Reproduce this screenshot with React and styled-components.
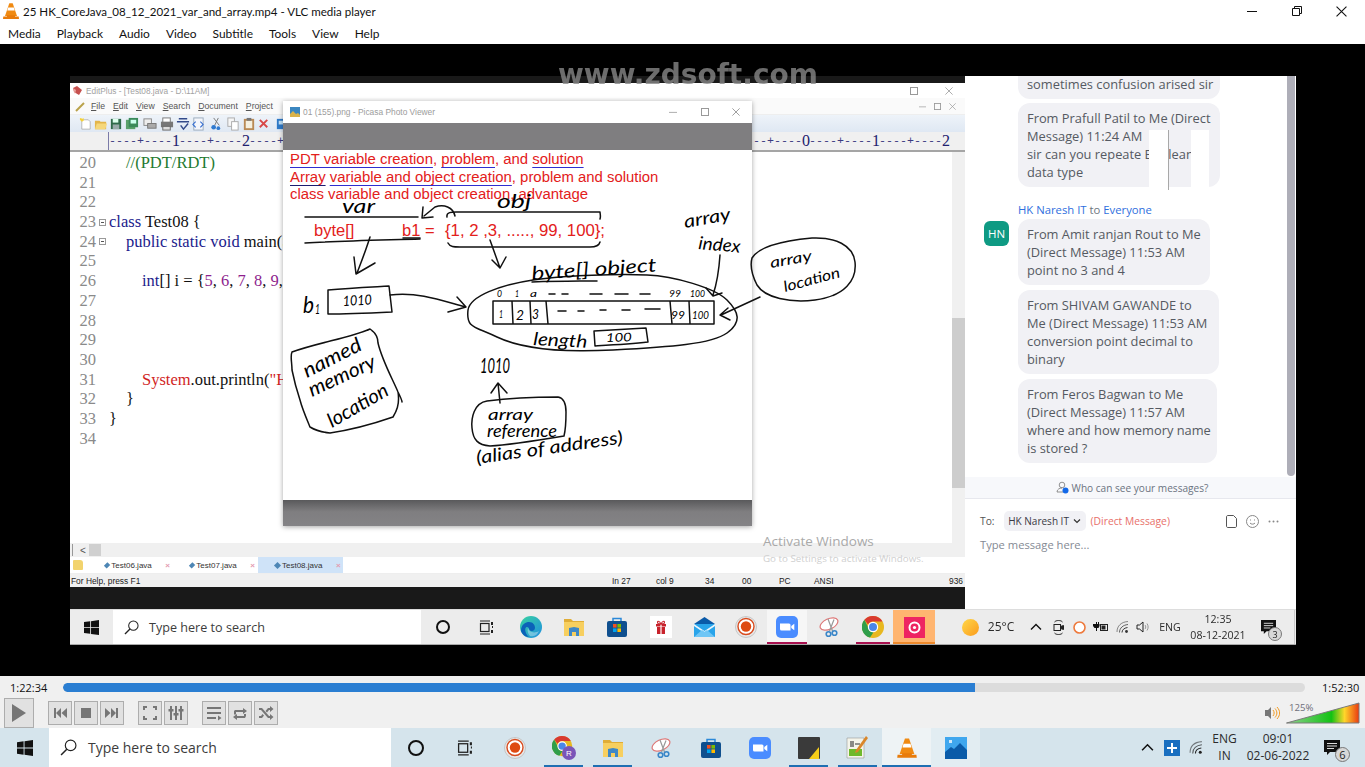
import React from 'react';
import styled, { createGlobalStyle } from 'styled-components';

const Global = createGlobalStyle`
  html, body { margin: 0; padding: 0; background: #000; overflow: hidden; }
  #root { width: 1365px; height: 767px; }
  * { box-sizing: border-box; }
`;

const UI = `"Open Sans", "Noto Sans", sans-serif`;
const SHELL = `Lato, "Open Sans", sans-serif`;
const ARIAL = `"Liberation Sans", Arial, sans-serif`;
const SERIF = `"Liberation Serif", "Times New Roman", serif`;
const MONO = `"Liberation Mono", monospace`;
const HANDFONT = `Lato, "Open Sans", sans-serif`;

/* ---------- page shell ---------- */
const Page = styled.div`
  width: 1365px; height: 767px; display: flex; flex-direction: column; overflow: hidden;
  font-family: ${UI}; color: #111; background: #000;
`;
const TitleBar = styled.header`
  height: 22px; flex: none; background: #fff; display: flex; align-items: center; padding-left: 2px;
  font: 11.55px ${SHELL}; color: #111; white-space: nowrap;
`;
const TitleText = styled.span` margin-left: 3px; flex: 1; `;
const WindowButtons = styled.div` display: flex; height: 22px; margin-right: 1px; `;
const WindowButton = styled.div`
  width: 45px; display: flex; align-items: center; justify-content: center;
  svg { display: block; }
`;
const MenuBar = styled.nav`
  height: 22px; flex: none; background: #fff; display: flex; align-items: center; padding-left: 8px; gap: 16px;
  font: 11.95px ${SHELL}; color: #111;
`;
const VideoStage = styled.main`
  position: relative; height: 632px; flex: none; background: #000; padding: 32px 69px 31px 70px;
`;
const Watermark = styled.div`
  position: absolute; left: 558px; top: 14px; width: 259px; z-index: 5; white-space: nowrap; line-height: 34px;
  font-family: "DejaVu Sans", ${ARIAL}; font-weight: bold; font-size: 28px; color: rgba(135,135,135,.8); text-align: center; filter: blur(.5px);
`;
const RemoteScreen = styled.div` height: 569px; display: flex; flex-direction: column; filter: blur(.35px); `;
const RemoteMain = styled.div` flex: 1; display: flex; min-height: 0; `;
const Desktop = styled.div`
  position: relative; width: 895px; background: #191919; padding: 7px 0 22px;
`;

/* ---------- EditPlus ---------- */
const EditPlus = styled.section`
  position: relative; height: 504px; background: #fff; display: flex; flex-direction: column;
`;
const EpTitle = styled.div`
  height: 15px; display: flex; align-items: center; padding: 0 12px 0 2px; gap: 3px; background: #fff;
  font: 8.3px ${ARIAL}; color: #a2a2a2;
`;
const EpTitleText = styled.span` flex: 1; `;
const EpWinBtn = styled.span` margin-left: 24px; width: 8px; height: 8px; display: flex; svg { display: block; } `;
const EpMenu = styled.div`
  height: 16px; display: flex; align-items: center; padding: 0 9px 0 5px; gap: 8px; background: #fafafa;
  font: 8.7px ${ARIAL}; color: #555;
  u { text-underline-offset: 1px; }
`;
const EpPencil = styled.svg` margin-right: -3px; flex: none; `;
const EpMenuSpacer = styled.span` flex: 1; `;
const EpToolbar = styled.div`
  height: 18px; display: flex; align-items: center; padding-left: 8px; background: linear-gradient(#eef3f9, #dfe8f3);
  border-top: 1px solid #eee;
`;
const ToolSlot = styled.span`
  width: ${p => p.$w || 15.4}px; flex: none; display: flex; justify-content: center;
  svg { display: block; }
`;
const Ruler = styled.div`
  height: 20px; background: #f0f0f0; border-bottom: 2px solid #a5a5a5; display: flex; align-items: center;
  padding-left: 38px; overflow: hidden;
`;
const RulerTrack = styled.div`
  height: 18px; width: 844px; border-left: 1px solid #7b7ba8; display: flex; align-items: center;
  font: 11.67px ${MONO}; color: #3a3a80; white-space: pre; background: #f0f0f0;
`;
const RulerMark = styled.span`
  width: 7px; flex: none; text-align: center;
`;
const RulerDigit = styled(RulerMark)`
  font: 16px ${SERIF}; color: #20206e;
`;
const EditorBody = styled.div` flex: 1; display: flex; min-height: 0; background: #fff; `;
const CodeArea = styled.div` flex: 1; padding-top: 1px; overflow: hidden; `;
const CodeLine = styled.div`
  height: 19.7px; display: grid; grid-template-columns: 26px 13px 1fr; align-items: center;
  font: 16.5px ${SERIF}; white-space: pre; color: #111;
`;
const LineNo = styled.span` text-align: right; color: #8a8a8a; `;
const FoldCell = styled.span` display: flex; justify-content: center; `;
const FoldBox = styled.span`
  width: 7px; height: 7px; border: 1px solid #999; position: relative;
  &::after { content: ''; position: absolute; left: 1px; right: 1px; top: 2px; height: 1px; background: #555; }
`;
const Code = styled.span` padding-left: ${p => p.$i || 0}px; `;
const Kw = styled.span` color: #1b1b8c; `;
const Str = styled.span` color: #8e1f8e; `;
const Red = styled.span` color: #d11f1f; `;
const Cm = styled.span` color: #1f7a30; `;
const EdScroll = styled.div`
  width: 13px; flex: none; background: #f0f0f0; padding-top: 166px;
`;
const EdThumb = styled.div` width: 13px; height: 170px; background: #cdcdcd; `;
const HScroll = styled.div`
  height: 14px; background: #f0f0f0; display: flex; align-items: center; padding-left: 2px;
  font: 10px ${ARIAL}; color: #555;
`;
const HScrollEdge = styled.span` width: 1px; height: 12px; background: #999; margin-right: 7px; `;
const HThumb = styled.span` width: 12px; height: 12px; background: #d0d0d0; margin-left: 3px; `;
const TabsRow = styled.div` height: 17px; display: flex; align-items: stretch; background: #fff; padding-left: 3px; border-bottom: 1px solid #eee; `;
const TabFolder = styled.span` width: 10px; height: 10px; margin-top: 3px; background: #f2d36d; border-radius: 1px 3px 1px 1px; margin-right: 0; `;
const Tab = styled.div`
  width: 85px; margin-left: ${p => p.$ml || 0}px; display: flex; align-items: center; padding-left: ${p => p.$pl || 18}px;
  background: ${p => p.$active ? '#cfe3f8' : 'transparent'};
  font: 8px ${ARIAL}; color: #333;
`;
const TabDot = styled.span` width: 5px; height: 5px; background: #4d86b5; transform: rotate(45deg); margin-right: 2px; `;
const TabName = styled.span` width: 40px; white-space: nowrap; `;
const TabClose = styled.span` margin-left: 14px; color: #e49ab0; font-size: 8px; font-weight: bold; `;
const Status = styled.div`
  height: 13px; background: #f0f0f0; padding-left: 1px; display: grid;
  grid-template-columns: 541px 44px 49px 37px 37px 35px 135px 1fr; align-items: center;
  font: 8.4px ${ARIAL}; color: #222; white-space: nowrap;
`;
const ActivateNote = styled.div`
  position: absolute; left: 693px; top: 449px; z-index: 1; pointer-events: none; white-space: nowrap;
  color: #a9a9a9; font: 13.5px ${UI};
`;
const ActivateSub = styled.div` margin-top: 2px; font: 9.8px ${UI}; color: #cfcfcf; `;

/* ---------- Picasa ---------- */
const Picasa = styled.section`
  position: absolute; left: 213px; top: 25px; width: 469px; height: 425px; z-index: 2; background: #fff;
  display: flex; flex-direction: column; box-shadow: 0 1px 5px rgba(0,0,0,.35);
`;
const PicasaTitle = styled.div`
  height: 22px; flex: none; display: flex; align-items: center; padding-left: 7px; background: #fff;
  font: 8.4px ${ARIAL}; color: #9c9c9c;
`;
const PicasaTitleText = styled.span` flex: 1; margin-left: 3px; `;
const PicasaBtn = styled.span` width: 31.5px; display: flex; justify-content: center; svg { display: block; } `;
const PicasaTop = styled.div` height: 27px; flex: none; background: #7f7e80; `;
const PicasaImage = styled.div` position: relative; height: 350px; flex: none; background: #fff; padding: 1px 0 0 7px; `;
const PicasaBottom = styled.div` flex: 1; background: linear-gradient(#59595b, #7f7e80 45%, #848386); `;
const SlideLine = styled.div`
  height: 17.6px; font: 14.9px/17.6px ${ARIAL}; color: #e3201b; white-space: nowrap;
`;
const Under = styled.span`
  text-decoration: underline; text-decoration-color: ${p => p.$dark ? '#1c1c70' : '#2e2ed0'};
  text-decoration-thickness: 1.2px; text-underline-offset: 3px;
`;
const Sketch = styled.svg`
  position: absolute; left: 0; top: 0; overflow: visible; pointer-events: none;
`;
const Ink = styled.path` fill: none; stroke: #111; stroke-width: 1.5; stroke-linecap: round; stroke-linejoin: round; `;
const HandText = styled.text` font-family: ${HANDFONT}; font-style: italic; font-weight: 400; fill: #000; `;
const RedText = styled.text` font-family: ${ARIAL}; fill: #e3201b; `;

/* ---------- chat ---------- */
const Chat = styled.aside`
  position: relative; width: 331px; background: #fff; display: flex; flex-direction: column; font-family: ${UI};
`;
const ChatScrollThumb = styled.div`
  position: absolute; right: 1px; top: 0; width: 8px; height: 400px; background: #aeaeb8; border-radius: 0 0 4px 4px; z-index: 2;
`;
const ChatList = styled.div`
  height: 401px; flex: none; overflow: hidden; display: flex; flex-direction: column; justify-content: flex-end;
  gap: 16px; padding: 0 0 14px 19px;
`;
const MsgGroup = styled.div`
  display: grid; grid-template-columns: 25px 1fr; column-gap: 9px; flex: none;
`;
const Sender = styled.div`
  grid-column: 2; height: 16px; font-size: 11.3px; line-height: 14px; color: #2f6fde; white-space: nowrap;
`;
const SenderTo = styled.span` color: #6e7680; `;
const Avatar = styled.div`
  grid-column: 1; width: 25px; height: 25px; margin-top: 2px; border-radius: 6px; background: #0e9a83; color: #fff;
  font-size: 11.5px; display: flex; align-items: center; justify-content: center;
`;
const Bubbles = styled.div` grid-column: 2; display: flex; flex-direction: column; gap: ${p => p.$gap || 5}px; position: relative; `;
const Bubble = styled.div`
  width: ${p => p.$w}px; padding: 6px 9px; border-radius: 12px; background: #f1f1f5; color: #555a62;
  font-size: 12.85px; line-height: 18px; white-space: nowrap; flex: none;
`;
const Glitch = styled.div`
  position: absolute; bottom: -3px; height: 60px; width: ${p => p.$w}px; left: ${p => p.$x}px; background: #fff;
  border-right: ${p => p.$line ? '1px solid #a8a8a8' : 'none'};
`;
const WhoCan = styled.div`
  height: 22px; flex: none; background: #f7f8fb; border-bottom: 1px solid #e7e8ee; display: flex; align-items: center; justify-content: center;
  gap: 3px; padding-left: 3px; font-size: 10.1px; color: #6b7380;
  svg { display: block; }
`;
const Compose = styled.div` flex: 1; background: #fff; padding: 12px 15px; `;
const ToRow = styled.div` display: flex; align-items: center; height: 20px; font-size: 10.3px; color: #555; `;
const ToChip = styled.div`
  margin-left: 9px; width: 82px; height: 20px; border-radius: 5px; background: #f1f1f5; color: #3a3a44;
  display: flex; align-items: center; justify-content: center; gap: 4px; white-space: nowrap; font-size: 10px;
  svg { display: block; }
`;
const DirectTag = styled.span` margin-left: 5px; flex: 1; color: #e8706a; white-space: nowrap; `;
const ToIcons = styled.div` display: flex; align-items: center; gap: 9px; margin-right: 2px; svg { display: block; } `;
const Placeholder = styled.div` margin-top: 5px; font-size: 11.2px; line-height: 18px; color: #848a94; `;

/* ---------- remote taskbar ---------- */
const RemoteTaskbar = styled.div`
  height: 36px; flex: none; display: flex; background: #ececec; border-bottom: 1px solid #a9a9a9; border-top: 1px solid #ddd;
  padding-right: 3px;
`;
const StartSlot = styled.div` width: ${p => p.$w}px; flex: none; display: flex; align-items: center; justify-content: center; svg { display: block; } `;
const SearchBox = styled.div`
  width: ${p => p.$w}px; flex: none; background: #fff; display: flex; align-items: center; color: #3c3c3c;
  font-size: ${p => p.$fs}px; padding-left: ${p => p.$pl}px; gap: ${p => p.$gap}px; white-space: nowrap;
  svg { display: block; }
`;
const Tile = styled.div`
  position: relative; width: ${p => p.$w}px; flex: none; display: flex; align-items: center; justify-content: center;
  background: ${p => p.$bg || 'transparent'};
  svg { display: block; }
  ${p => p.$bar ? `&::after { content: ''; position: absolute; bottom: 0; left: ${p.$inset || 0}px; right: ${p.$inset || 0}px; height: 2px; background: ${p.$bar}; }` : ''}
`;
const CortanaRing = styled.span`
  width: ${p => p.$s}px; height: ${p => p.$s}px; border: 2.6px solid #111; border-radius: 50%; display: block;
`;
const TrayCell = styled.div`
  width: ${p => p.$w}px; flex: none; display: flex; flex-direction: column; align-items: center; justify-content: center;
  font-size: ${p => p.$fs || 11}px; line-height: ${p => p.$lh || 16}px; color: #2b2b2b; white-space: nowrap; position: relative;
  svg { display: block; }
`;
const TrayGap = styled.div` width: ${p => p.$w}px; flex: none; `;
const TrayEnd = styled.div` width: 1px; margin: 0 0 0 5px; background: #c9c9c9; flex: none; `;
const NotifBadge = styled.span`
  position: absolute; left: ${p => p.$x}px; top: ${p => p.$y}px; width: ${p => p.$s}px; height: ${p => p.$s}px; border-radius: 50%;
  background: #d8d8d8; border: 1px solid #777; color: #222; font-size: ${p => p.$fs}px; line-height: 1;
  display: flex; align-items: center; justify-content: center;
`;

/* ---------- VLC footer ---------- */
const SeekRow = styled.div`
  height: 21px; flex: none; background: #f0f0f0; display: flex; align-items: center; padding: 1px 7px 0 10px;
  font-size: 11px; color: #111;
`;
const TimeLabel = styled.span` width: 36px; white-space: nowrap; `;
const SeekTrack = styled.div` flex: 1; height: 9px; margin: 0 17px; border-radius: 5px; background: #dcdcdc; overflow: hidden; `;
const SeekFill = styled.div` height: 100%; background: #2a7ed2; border-radius: 5px 0 0 5px; `;
const ControlsRow = styled.div`
  height: 31px; flex: none; background: #f0f0f0; display: flex; align-items: center; padding-left: 4px;
`;
const PlayButton = styled.button`
  width: 30px; height: 30px; padding: 0; border: 1px solid #adadad; background: #e1e1e1; display: flex; align-items: center; justify-content: center;
  margin-right: 14px; svg { display: block; }
`;
const CtlGroup = styled.div` display: flex; gap: 2px; margin-right: 14px; `;
const CtlButton = styled.button`
  width: 24px; height: 24px; padding: 0; border: 1px solid #adadad; background: #e1e1e1; display: flex; align-items: center; justify-content: center;
  svg { display: block; }
`;
const VolumeBox = styled.div`
  position: relative; margin-left: auto; margin-right: 5px; display: flex; align-items: center; gap: 6px; height: 31px;
  svg { display: block; }
`;
const VolumeText = styled.span`
  position: absolute; left: 24px; top: 4px; font-size: 9.6px; color: #6f6f7a;
`;
const Taskbar = styled.footer`
  height: 39px; flex: none; background: #d5e4ec; display: flex; padding-right: 15px;
`;
const TaskSpacer = styled.div` flex: 1; `;

/* ---------- icons ---------- */
const WinLogo = ({ s = 16 }) => (
  <svg width={s} height={s} viewBox="0 0 16 16"><path fill="#111" d="M0 2.2 6.6 1.3v6.3H0zM7.5 1.2 16 0v7.6H7.5zM0 8.4h6.6v6.3L0 13.8zM7.5 8.4H16V16l-8.5-1.2z" /></svg>
);
const SearchGlyph = ({ s = 16 }) => (
  <svg width={s} height={s} viewBox="0 0 16 16" fill="none" stroke="#222" strokeWidth="1.1"><circle cx="10" cy="6" r="5" /><path d="M6.4 9.6 1 15" strokeWidth="1.4" /></svg>
);
const TaskView = ({ s = 15 }) => (
  <svg width={s} height={s} viewBox="0 0 15 15" fill="none" stroke="#222" strokeWidth="1.2"><rect x="1.5" y="3.5" width="8.5" height="8" /><path d="M1 1h10M1 14h10" /><path d="M13 2v3M13 7h1M13 10v3" strokeWidth="2" /></svg>
);
const VlcCone = ({ s = 18 }) => (
  <svg width={s} height={s} viewBox="0 0 18 18"><path fill="#f08a12" d="M7.3 1.2h3.4L15 14H3z" /><path fill="#fff" d="M6.2 5.5h5.6l.9 3H5.3z" /><path fill="#e87b0a" d="M1.3 14.5H5v-1.2h8v1.2h3.7l.3 2.4H1z" /></svg>
);
const Edge = ({ s = 22 }) => (
  <svg width={s} height={s} viewBox="0 0 22 22">
    <defs>
      <linearGradient id="edgeA" x1="0" y1="0" x2="1" y2="1"><stop offset="0" stopColor="#38d3a0" /><stop offset="1" stopColor="#1f8ee0" /></linearGradient>
    </defs>
    <circle cx="11" cy="11" r="11" fill="url(#edgeA)" />
    <path fill="#0b62b8" d="M1 15C1 8 6 6 9 6c4 0 6 3 6 6 0 2-2 3-3 3-4 0-2-4-5-4-3 0-2 7 2 10-4 0-7-3-8-6z" />
    <path fill="#fff" opacity=".35" d="M8 12c1 4 6 6 11 3-2 5-7 6-9 5-2-2-3-5-2-8z" />
  </svg>
);
const Files = ({ s = 22 }) => (
  <svg width={s} height={s} viewBox="0 0 22 22"><path fill="#e0ad37" d="M1 3h7l2 2h11v3H1z" /><path fill="#f7cf5f" d="M1 6h20v14H1z" /><path fill="#3e88c7" d="M6 20v-8l5-1 5 1v8h-3v-4H9v4z" /></svg>
);
const Store = ({ s = 22 }) => (
  <svg width={s} height={s} viewBox="0 0 22 22"><path fill="none" stroke="#2b88d8" strokeWidth="1.5" d="M7 5V2.5h8V5" /><rect x="1" y="5" width="20" height="16" rx="2" fill="#0f4f8e" /><rect x="7" y="8" width="3.6" height="3.6" fill="#f25022" /><rect x="11.4" y="8" width="3.6" height="3.6" fill="#7fba00" /><rect x="7" y="12.4" width="3.6" height="3.6" fill="#00a4ef" /><rect x="11.4" y="12.4" width="3.6" height="3.6" fill="#ffb900" /></svg>
);
const Gift = ({ s = 22 }) => (
  <svg width={s} height={s} viewBox="0 0 22 22"><rect width="22" height="22" fill="#fff" /><path fill="#c8232c" d="M6 8h10v2.5H6zM7 11h8v7H7z" /><path fill="#fff" d="M10.4 8h1.2v10h-1.2z" /><path fill="none" stroke="#c8232c" strokeWidth="1.1" d="M11 8C9 4 6.5 5 8 7.5zM11 8c2-4 4.5-3 3-.5z" /></svg>
);
const Mail = ({ s = 23 }) => (
  <svg width={s} height={s} viewBox="0 0 23 23"><path fill="#0a5aa8" d="M1 8 11.5 1 22 8v1H1z" /><rect x="1" y="8" width="21" height="13" fill="#29a4ea" /><path fill="#fff" d="M1 8l10.5 7L22 8v2l-10.5 7L1 10z" opacity=".9" /><path fill="#6fc6f5" d="M1 21l8-7 2.5 1.7L14 14l8 7z" /></svg>
);
const Record = ({ s = 22 }) => (
  <svg width={s} height={s} viewBox="0 0 22 22"><circle cx="11" cy="11" r="10.5" fill="#e8e8e8" stroke="#bdbdbd" strokeWidth=".8" /><circle cx="11" cy="10.5" r="8" fill="#fff" stroke="#d84b1e" strokeWidth="1.4" /><circle cx="11" cy="10.5" r="5.2" fill="#de4a12" /></svg>
);
const ZoomApp = ({ s = 22 }) => (
  <svg width={s} height={s} viewBox="0 0 22 22"><rect width="22" height="22" rx="5" fill="#4a8cff" /><path fill="#fff" d="M4 7.5h9a1.5 1.5 0 0 1 1.5 1.5v5.5H5.5A1.5 1.5 0 0 1 4 13zM15.3 10l3-2.2v6.4l-3-2.2z" /></svg>
);
const Snip = ({ s = 22 }) => (
  <svg width={s} height={s} viewBox="0 0 22 22" fill="none"><ellipse cx="10" cy="8" rx="9.5" ry="5.2" transform="rotate(-25 10 8)" stroke="#d77" strokeWidth="1.2" fill="#fff" /><path d="M9 3l4.5 12M15 3.5 10.5 15" stroke="#999" strokeWidth="1.2" /><circle cx="9.5" cy="18" r="2.3" stroke="#3a86c8" strokeWidth="1.6" /><circle cx="15.5" cy="17" r="2.3" stroke="#3a86c8" strokeWidth="1.6" /></svg>
);
const Chrome = ({ s = 22 }) => (
  <svg width={s} height={s} viewBox="0 0 22 22"><circle cx="11" cy="11" r="11" fill="#e8b820" /><path fill="#d93a30" d="M11 0a11 11 0 0 1 9.5 5.5H11a5.5 5.5 0 0 0-5 3L2.4 3.8A11 11 0 0 1 11 0z" /><path fill="#2f9e4a" d="M2.4 3.8 6.5 12a5 5 0 0 0 5 4.3L8 21.6A11 11 0 0 1 2.4 3.8z" /><circle cx="11" cy="11" r="5.2" fill="#fff" /><circle cx="11" cy="11" r="4" fill="#4a86e8" /></svg>
);
const ChromeProfile = ({ s = 24 }) => (
  <svg width={s} height={s} viewBox="0 0 24 24"><g transform="scale(.92)"><circle cx="11" cy="11" r="11" fill="#e8b820" /><path fill="#d93a30" d="M11 0a11 11 0 0 1 9.5 5.5H11a5.5 5.5 0 0 0-5 3L2.4 3.8A11 11 0 0 1 11 0z" /><path fill="#2f9e4a" d="M2.4 3.8 6.5 12a5 5 0 0 0 5 4.3L8 21.6A11 11 0 0 1 2.4 3.8z" /><circle cx="11" cy="11" r="5.2" fill="#fff" /><circle cx="11" cy="11" r="4" fill="#4a86e8" /></g><circle cx="17" cy="17" r="7" fill="#7a55b8" /><text x="17" y="20" fontSize="8" fill="#fff" textAnchor="middle" fontFamily={ARIAL}>R</text></svg>
);
const PinkApp = () => (
  <svg width="21" height="21" viewBox="0 0 21 21"><rect width="21" height="21" fill="#ee2462" /><circle cx="10.5" cy="10.5" r="5" fill="none" stroke="#fff" strokeWidth="2" /><circle cx="10.5" cy="10.5" r="1.6" fill="#fff" /></svg>
);
const Sun = () => (
  <svg width="17" height="17" viewBox="0 0 17 17"><defs><linearGradient id="sunA" x1="0" y1="0" x2="1" y2="1"><stop offset="0" stopColor="#ffd84a" /><stop offset="1" stopColor="#fb9b1c" /></linearGradient></defs><circle cx="8.5" cy="8.5" r="8.5" fill="url(#sunA)" /></svg>
);
const Chevron = ({ s = 12 }) => (
  <svg width={s} height={s} viewBox="0 0 12 12" fill="none" stroke="#111" strokeWidth="1.4"><path d="M1 8.5 6 3.5l5 5" /></svg>
);
const MeetIcon = () => (
  <svg width="11" height="17" viewBox="0 0 11 17" fill="none" stroke="#222" strokeWidth="1"><path d="M1.5 3C3 1 8 1 9.5 3M1.5 14c1.5 2 6.5 2 8 0" /><rect x="1" y="5.5" width="6.5" height="6" /><path d="M7.5 7.5l3-1v4l-3-1z" fill="#222" /></svg>
);
const OrangeRing = () => (
  <svg width="13" height="15" viewBox="0 0 13 15"><circle cx="6.5" cy="7.5" r="5.5" fill="#fff" stroke="#ee7a3d" strokeWidth="1.6" /></svg>
);
const Battery = () => (
  <svg width="15" height="11" viewBox="0 0 15 11"><path fill="#111" d="M0 2h3V0h1v2h1V0h1v2h.5v2l-1 2H4v3H3V6H1.500L0 4z" /><rect x="7.500" y="2.500" width="7" height="6" fill="none" stroke="#222" strokeWidth="1" /><rect x="8.500" y="3.500" width="4" height="4" fill="#222" /></svg>
);
const Wifi = ({ s = 14, c = '#333' }) => (
  <svg width={s} height={s} viewBox="0 0 14 14" fill="none" stroke={c} strokeWidth="1"><path d="M1 12C1 6 5 2 12 1.500" opacity=".55" /><path d="M3.500 12.500C3.500 8 7 5 12 4.500" opacity=".75" /><path d="M6 12.500C6 10 8 8 11.500 7.500" /><circle cx="10.500" cy="11.500" r="1.400" fill={c} stroke="none" /></svg>
);
const Speaker = () => (
  <svg width="15" height="14" viewBox="0 0 15 14" fill="none" stroke="#222" strokeWidth="1"><path d="M1 5h2.500L7 2v10L3.500 9H1z" /><path d="M9 5c1 1 1 3 0 4M11 3.500c1.500 2 1.500 5 0 7" stroke="#999" /></svg>
);
const NotifIcon = ({ s = 16 }) => (
  <svg width={s} height={s} viewBox="0 0 16 16"><path fill="#111" d="M0 0h16v12H6l-3 3v-3H0z" /><path stroke="#ddd" strokeWidth="1" d="M3 3.500h10M3 6h10M3 8.500h7" /></svg>
);
const Stickies = () => (
  <svg width="22" height="22" viewBox="0 0 22 22"><rect width="22" height="22" rx="1" fill="#3a3a3a" /><path fill="#f5cd1a" d="M11 22 21 10v12z" /></svg>
);
const Notepad = () => (
  <svg width="23" height="24" viewBox="0 0 23 24"><path fill="#f4f4ea" stroke="#999" strokeWidth=".6" d="M1 2h17v20H1z" /><path fill="#6fb92c" d="M3 13h13v7H3z" /><path stroke="#333" strokeWidth="1.1" d="M5 5v6M7 5v6M9 8h5" /><path fill="#d9862a" d="M20 0l2 2-10 14-3 1 1-3z" /></svg>
);
const Photos = () => (
  <svg width="22" height="22" viewBox="0 0 22 22"><rect width="22" height="22" fill="#0a5ba8" /><path fill="#3fa7ee" d="M0 0h22v13L15 6l-6 6-3-2-6 5z" /><path fill="#cfe8fa" d="M4 3h3v3H4z" /></svg>
);
const EpLogo = () => (
  <svg width="11" height="11" viewBox="0 0 11 11"><path fill="#c6504e" d="M1 3l4-2 5 4-3 5-5-3z" /><path fill="#e9a5a0" d="M1 3l3 2-1 4z" /></svg>
);
const WinMin = ({ c = '#111', s = 10 }) => <svg width={s} height={s} viewBox="0 0 10 10"><path d="M0 5.500h10" stroke={c} /></svg>;
const WinMax = ({ c = '#111', s = 10 }) => <svg width={s} height={s} viewBox="0 0 10 10" fill="none" stroke={c}><path d="M2.500 2.500V.5h7v7h-2M.5 2.500h7v7h-7z" /></svg>;
const WinBox = ({ c = '#999', s = 8 }) => <svg width={s} height={s} viewBox="0 0 8 8" fill="none" stroke={c}><rect x=".5" y=".5" width="7" height="7" /></svg>;
const WinClose = ({ c = '#111', s = 10 }) => <svg width={s} height={s} viewBox="0 0 10 10" stroke={c}><path d="M.5.5l9 9M9.500.5l-9 9" /></svg>;

const toolIcons = [
  <><path fill="#fff" stroke="#999" strokeWidth=".7" d="M3 3h7l2 2v8H3z" /><path fill="#f5d23a" d="M1 1l3 1 1-1v3l-2 1-2-2z" /></>,
  <><path fill="#e3b54a" d="M1 4h5l1 1h6v8H1z" /><path fill="#f5d77a" d="M3 7h11l-2 6H1z" /></>,
  <><rect x="2" y="2" width="11" height="11" fill="#2f6a4a" /><rect x="4" y="2" width="6" height="4" fill="#dfe" /><rect x="4" y="8" width="7" height="5" fill="#9aa" /></>,
  <><rect x="1" y="3" width="10" height="10" fill="#5aa16a" /><rect x="4" y="1" width="10" height="10" fill="#3a8a5a" /><rect x="6" y="3" width="6" height="4" fill="#cfe" /></>,
  <><rect x="1" y="2" width="8" height="7" fill="#eee" stroke="#888" /><rect x="5" y="7" width="9" height="5" fill="#aaa" stroke="#777" /></>,
  <><rect x="3" y="1" width="8" height="5" fill="#fff" stroke="#777" /><rect x="1" y="5" width="13" height="6" fill="#777" /><rect x="3" y="10" width="8" height="4" fill="#ddd" stroke="#666" /></>,
  <><path d="M1 5h13M3 2h9M5 9l3 4 5-6" stroke="#334a8a" strokeWidth="1.6" fill="none" /></>,
  <><rect x="3" y="1" width="10" height="13" fill="#f4f6fb" stroke="#9ab" /><path d="M5 5 2 8l3 3M10 5l3 3-3 3" stroke="#2f6ad0" fill="none" strokeWidth="1.1" /></>,
  <><path d="M10 1 6 9M5 1l6 8" stroke="#777" fill="none" /><circle cx="5" cy="11" r="2.500" fill="#2f7ad0" /><circle cx="10" cy="12" r="2" fill="#2f7ad0" /></>,
  <><rect x="2" y="1" width="7" height="9" fill="#f6f6f6" stroke="#aaa" /><rect x="6" y="5" width="7" height="9" fill="#fff" stroke="#aaa" /></>,
  <><rect x="2" y="2" width="11" height="12" fill="#b98a55" /><rect x="4" y="4" width="7" height="8" fill="#f5f0e0" /><rect x="5" y="1" width="5" height="3" fill="#777" /></>,
  <><path d="M3 3l8 8M11 3l-8 8" stroke="#d84848" strokeWidth="2" /></>,
  <><rect x="2" y="2" width="12" height="11" fill="#2f7ac8" /><rect x="4" y="4" width="8" height="4" fill="#bfe0f8" /></>,
];
const ToolIcon = ({ i }) => <svg width="14" height="14" viewBox="0 0 15 15">{toolIcons[i]}</svg>;

const CtlIcon = ({ children, s = 16, vb = 16 }) => <svg width={s} height={s} viewBox={`0 0 ${vb} ${vb}`} fill="#767676">{children}</svg>;

/* ---------- data ---------- */
const rulerChars = Array.from({ length: 120 }, (_, k) => {
  const i = k + 1;
  if (i % 10 === 0) return { d: String((i / 10) % 10) };
  return { c: i % 5 === 0 ? '+' : '-' };
});

const codeLines = [
  [20, false, 17, <Cm>//(PDT/RDT)</Cm>],
  [21, false, 0, ''],
  [22, false, 0, ''],
  [23, true, 0, <><Kw>class</Kw> Test08 {'{'}</>],
  [24, true, 17, <><Kw>public static void</Kw> main(String[] args) {'{'}</>],
  [25, false, 0, ''],
  [26, false, 33, <><Kw>int</Kw>[] i = {'{'}<Str>5</Str>, <Str>6</Str>, <Str>7</Str>, <Str>8</Str>, <Str>9</Str>, <Str>10</Str>{'}'};</>],
  [27, false, 0, ''],
  [28, false, 0, ''],
  [29, false, 0, ''],
  [30, false, 0, ''],
  [31, false, 33, <><Red>System</Red>.out.println(<Red>"Hello"</Red>);</>],
  [32, false, 17, '}'],
  [33, false, 0, '}'],
  [34, false, 0, ''],
];

const hand = [
  ['var', 342, 213, 19, 33, 0],
  ['obj', 497, 208, 19, 34, 0],
  ['array', 685, 228, 18, 47, -10],
  ['index', 698, 249, 18, 42, 5],
  ['byte[] object', 532, 280, 19, 125, -4],
  ['b', 303, 313, 24, 11, 0],
  ['1', 315, 314, 14, 5, 0],
  ['1010', 343, 306, 14, 29, -3],
  ['0', 497, 297, 9, 5, 0],
  ['1', 515, 297, 9, 4, 0],
  ['a', 530, 297, 10, 7, 0],
  ['99', 669, 297, 10, 12, 0],
  ['100', 690, 297, 9, 15, 0],
  ['1', 499, 318, 12, 4, 0],
  ['2', 516, 320, 14, 8, 0],
  ['3', 532, 319, 13, 7, 0],
  ['99', 671, 319, 12, 14, 0],
  ['100', 692, 319, 12, 17, 0],
  ['length', 533, 345, 18, 54, 3],
  ['100', 606, 342, 12, 26, -2],
  ['named', 307, 378, 20, 63, -27],
  ['memory', 312, 397, 20, 72, -25],
  ['location', 332, 428, 20, 67, -30],
  ['1010', 480, 373, 22, 30, 0],
  ['array', 488, 420, 16, 45, 0],
  ['reference', 487, 437, 18, 70, 0],
  ['(alias of address)', 477, 464, 18, 148, -8],
  ['array', 771, 268, 15, 42, -10],
  ['location', 785, 292, 15, 58, -15],
];

const inkPaths = [
  'M305 217H418',
  'M455 216C453 207 444 204 435 207L424 216M423 207L422 218L433 217',
  'M447 217C446 212 452 212 456 212H600C600 214 601 216 600 219',
  'M305 243C340 241 390 240 420 239',
  'M403 238H420',
  'M448 243C450 247 454 247 460 247H590C596 247 599 246 600 242',
  'M370 237C366 250 362 260 357 273M354 257L356 274L375 263',
  'M490 240L500 268M492 260L500 268L506 257',
  'M720 255C719 270 717 283 713 295M706 288L713 296L722 293',
  'M328 290C350 288 372 287 389 286L392 312C370 313 348 314 328 314Z',
  'M390 295C420 292 440 300 465 307M457 297L466 307L448 312',
  'M468 310C470 296 500 285 533 280S620 274 647 275S715 288 727 300S742 322 727 333S670 347 613 350S520 348 497 337S466 328 468 310Z',
  'M493 301H714V324H493ZM512 301L513 324M530 301L531 324M546 301L548 324M670 301L672 324M689 301L690 324',
  'M558 311H566M578 311H584M600 310H606M622 310H630M645 309H660',
  'M549 294H555M562 294H568M590 294H602M615 294H628M640 294H650',
  'M594 331C610 330 630 329 646 328L648 342C630 344 612 345 595 346Z',
  'M532 282C560 281 590 281 597 281',
  'M292 352C320 342 350 338 370 329C376 333 378 338 378 343C382 360 392 378 398 392C400 396 402 400 402 402M398 392C400 405 396 412 393 417C370 425 350 430 330 433C320 432 315 430 310 427C305 415 302 408 300 400C296 388 294 380 292 370C292 362 290 356 292 352',
  'M500 403L498 383M491 393L498 383L507 393',
  'M487 401C510 398 540 397 558 397C564 398 566 404 566 412C566 422 566 428 564 436C540 440 510 445 490 446C478 445 473 440 472 428C471 418 474 403 487 401Z',
  'M752 258C760 245 790 240 812 238C835 237 853 245 855 262C857 280 845 296 815 300C790 303 765 298 757 285C752 275 750 265 752 258Z',
  'M760 297L721 315M728 308L720 315L730 320',
];

const ctlGroups = [
  [
    <CtlIcon><path d="M2 3h2v10H2zM9 3v10L4 8zM15 3v10L9.500 8z" /></CtlIcon>,
    <CtlIcon><rect x="3" y="3" width="10" height="10" /></CtlIcon>,
    <CtlIcon><path d="M1 3v10l5.500-5zM7 3v10l5-5zM12 3h2v10h-2z" /></CtlIcon>,
  ],
  [
    <CtlIcon><path d="M1 1h4v2H3v2H1zM11 1h4v4h-2V3h-2zM1 11h2v2h2v2H1zM13 11h2v4h-4v-2h2z" /></CtlIcon>,
    <CtlIcon><path d="M2 1h2v3h1.500v2.500H4V15H2V6.500H.5V4H2zM7 1h2v7h1.500v2.500H9V15H7v-4.500H5.500V8H7zM12 1h2v3h1.500v2.500H14V15h-2V6.500h-1.500V4H12z" /></CtlIcon>,
  ],
  [
    <CtlIcon><path d="M1 2h14v2H1zM1 7h14v2H1zM1 12h9v2H1zM12 10.500l3.500 2.500L12 15.500z" /></CtlIcon>,
    <CtlIcon><path d="M3 5h8V3l4 3-4 3V7H4v2.500H2V6zM14 9v2l-1 2H5v2l-4-3 4-3v2h7v-2z" /></CtlIcon>,
    <CtlIcon><path d="M1 3h3l7 8h1V9l3.500 3L12 15v-2h-2L3 5H1zM12 1l3.500 3L12 7V5h-1l-2 2.500L7.500 6 10 3h2zM1 11h2l1.500-2 1.500 1.500L4 13H1z" /></CtlIcon>,
  ],
];

export default function App() {
  return (
    <Page>
      <Global />
      <TitleBar>
        <VlcCone />
        <TitleText>25 HK_CoreJava_08_12_2021_var_and_array.mp4 - VLC media player</TitleText>
        <WindowButtons>
          <WindowButton><WinMin /></WindowButton>
          <WindowButton><WinMax /></WindowButton>
          <WindowButton><WinClose s={11} /></WindowButton>
        </WindowButtons>
      </TitleBar>
      <MenuBar>
        {['Media', 'Playback', 'Audio', 'Video', 'Subtitle', 'Tools', 'View', 'Help'].map(m => <span key={m}>{m}</span>)}
      </MenuBar>

      <VideoStage>
        <Watermark>www.zdsoft.com</Watermark>
        <RemoteScreen>
          <RemoteMain>
            <Desktop>
              <EditPlus>
                <EpTitle>
                  <EpLogo />
                  <EpTitleText>EditPlus - [Test08.java - D:\11AM]</EpTitleText>
                  <EpWinBtn><WinBox /></EpWinBtn>
                  <EpWinBtn><WinClose c="#999" s={8} /></EpWinBtn>
                </EpTitle>
                <EpMenu>
                  <EpPencil width="11" height="11" viewBox="0 0 11 11"><path d="M1 10 9 2" stroke="#b9a24a" strokeWidth="2" /></EpPencil>
                  <span><u>F</u>ile</span><span><u>E</u>dit</span><span><u>V</u>iew</span><span><u>S</u>earch</span><span><u>D</u>ocument</span><span><u>P</u>roject</span>
                  <EpMenuSpacer />
                  <WinMin c="#999" s={7} /><WinBox s={7} /><WinClose c="#999" s={7} />
                </EpMenu>
                <EpToolbar>
                  {toolIcons.map((_, i) => <ToolSlot key={i} $w={i === 4 || i === 8 || i === 12 ? 20 : 15.4}><ToolIcon i={i} /></ToolSlot>)}
                </EpToolbar>
                <Ruler>
                  <RulerTrack>
                    {rulerChars.map((r, i) => r.d ? <RulerDigit key={i}>{r.d}</RulerDigit> : <RulerMark key={i}>{r.c}</RulerMark>)}
                  </RulerTrack>
                </Ruler>
                <EditorBody>
                  <CodeArea>
                    {codeLines.map(([n, fold, indent, code]) => (
                      <CodeLine key={n}>
                        <LineNo>{n}</LineNo>
                        <FoldCell>{fold && <FoldBox />}</FoldCell>
                        <Code $i={indent}>{code}</Code>
                      </CodeLine>
                    ))}
                  </CodeArea>
                  <EdScroll><EdThumb /></EdScroll>
                </EditorBody>
                <HScroll><HScrollEdge />&lt;<HThumb /></HScroll>
                <TabsRow>
                  <TabFolder />
                  <Tab $ml={2} $pl={20}><TabDot /><TabName>Test06.java</TabName><TabClose>×</TabClose></Tab>
                  <Tab $pl={20}><TabDot /><TabName>Test07.java</TabName><TabClose>×</TabClose></Tab>
                  <Tab $active $ml={3} $pl={17}><TabDot /><TabName>Test08.java</TabName><TabClose>×</TabClose></Tab>
                </TabsRow>
                <Status>
                  <span>For Help, press F1</span>
                  <span>In 27</span><span>col 9</span><span>34</span><span>00</span><span>PC</span><span>ANSI</span><span>936</span>
                </Status>
                <ActivateNote>
                  Activate Windows
                  <ActivateSub>Go to Settings to activate Windows.</ActivateSub>
                </ActivateNote>
              </EditPlus>

              <Picasa>
                <PicasaTitle>
                  <svg width="10" height="10" viewBox="0 0 10 10"><rect width="10" height="10" fill="#3b86c0" /><path d="M0 7l3-3 3 3 2-1 2 2v2H0z" fill="#d9b24a" /></svg>
                  <PicasaTitleText>01 (155).png - Picasa Photo Viewer</PicasaTitleText>
                  <PicasaBtn><WinMin c="#999" s={8} /></PicasaBtn>
                  <PicasaBtn><WinBox s={8} /></PicasaBtn>
                  <PicasaBtn><WinClose c="#888" s={8} /></PicasaBtn>
                </PicasaTitle>
                <PicasaTop />
                <PicasaImage>
                  <SlideLine>
                    <Under>PDT variable creation</Under>, <Under>problem</Under>, and <Under>solution</Under>
                  </SlideLine>
                  <SlideLine>
                    <Under $dark>Array</Under> <Under>variable and object creation</Under>, problem and solution
                  </SlideLine>
                  <SlideLine>class variable and object creation, advantage</SlideLine>
                  <Sketch width="575" height="350" viewBox="283 150 575 350">
                    <RedText x="314" y="236" fontSize="16.5">byte[]</RedText>
                    <RedText x="402" y="236" fontSize="16.5">b1 =</RedText>
                    <RedText x="445" y="236" fontSize="16.5" textLength="160" lengthAdjust="spacingAndGlyphs">{'{1, 2 ,3, ....., 99, 100};'}</RedText>
                    {inkPaths.map((d, i) => <Ink key={i} d={d} />)}
                    {hand.map(([t, x, y, s, l, r], i) => (
                      <HandText key={i} x={x} y={y} fontSize={s} textLength={l} lengthAdjust="spacingAndGlyphs" transform={r ? `rotate(${r} ${x} ${y})` : undefined}>{t}</HandText>
                    ))}
                  </Sketch>
                </PicasaImage>
                <PicasaBottom />
              </Picasa>
            </Desktop>

            <Chat>
              <ChatScrollThumb />
              <ChatList>
                <MsgGroup>
                  <Bubbles $gap={4}>
                    <Bubble $w={202}>From Prafull Patil to Me (Direct<br />Message) 11:20 AM<br />sometimes confusion arised sir</Bubble>
                    <Bubble $w={202}>From Prafull Patil to Me (Direct<br />Message) 11:24 AM<br />sir can you repeate Boolean<br />data type</Bubble>
                    <Glitch $x={131} $w={20} $line />
                    <Glitch $x={173} $w={18} />
                  </Bubbles>
                </MsgGroup>
                <MsgGroup>
                  <Sender>HK Naresh IT <SenderTo>to</SenderTo> Everyone</Sender>
                  <Avatar>HN</Avatar>
                  <Bubbles>
                    <Bubble $w={192}>From Amit ranjan Rout to Me<br />(Direct Message) 11:53 AM<br />point no 3 and 4</Bubble>
                    <Bubble $w={201}>From SHIVAM GAWANDE to<br />Me (Direct Message) 11:53 AM<br />conversion point decimal to<br />binary</Bubble>
                    <Bubble $w={199}>From Feros Bagwan to Me<br />(Direct Message) 11:57 AM<br />where and how memory name<br />is stored ?</Bubble>
                  </Bubbles>
                </MsgGroup>
              </ChatList>
              <WhoCan>
                <svg width="13" height="13" viewBox="0 0 13 13" fill="none" stroke="#777" strokeWidth=".8"><circle cx="6" cy="4" r="2.800" /><path d="M1 11c0-3 3-4 5-4" /><path d="M1 11h6" /><circle cx="9.500" cy="9.500" r="3" fill="#1268e8" stroke="none" /></svg>
                Who can see your messages?
              </WhoCan>
              <Compose>
                <ToRow>
                  To:
                  <ToChip>HK Naresh IT
                    <svg width="8" height="8" viewBox="0 0 8 8" fill="none" stroke="#333" strokeWidth="1.200"><path d="M1 2.500 4 5.500 7 2.500" /></svg>
                  </ToChip>
                  <DirectTag>(Direct Message)</DirectTag>
                  <ToIcons>
                    <svg width="11" height="13" viewBox="0 0 11 13" fill="none" stroke="#555"><path d="M.5 2C.5 1 1 .5 2 .5h5.500l3 3V11c0 1-.5 1.500-1.500 1.500H2c-1 0-1.500-.5-1.500-1.500z" /></svg>
                    <svg width="13" height="13" viewBox="0 0 13 13" fill="none" stroke="#888"><circle cx="6.500" cy="6.500" r="6" /><path d="M4 8c1.200 1.500 3.800 1.500 5 0" /><path d="M4.500 4.500v1M8.500 4.500v1" /></svg>
                    <svg width="11" height="3" viewBox="0 0 11 3" fill="#888"><circle cx="1.500" cy="1.500" r="1" /><circle cx="5.500" cy="1.500" r="1" /><circle cx="9.500" cy="1.500" r="1" /></svg>
                  </ToIcons>
                </ToRow>
                <Placeholder>Type message here...</Placeholder>
              </Compose>
            </Chat>
          </RemoteMain>

          <RemoteTaskbar>
            <StartSlot $w={43}><WinLogo s={15} /></StartSlot>
            <SearchBox $w={308} $fs={12.6} $pl={11} $gap={10}><SearchGlyph s={15} />Type here to search</SearchBox>
            <Tile $w={44}><CortanaRing $s={14} /></Tile>
            <Tile $w={43}><TaskView s={15} /></Tile>
            <Tile $w={45}><Edge /></Tile>
            <Tile $w={42}><Files /></Tile>
            <Tile $w={44}><Store /></Tile>
            <Tile $w={44}><Gift /></Tile>
            <Tile $w={42}><Mail /></Tile>
            <Tile $w={42}><Record /></Tile>
            <Tile $w={40} $bg="#f6f6f6" $bar="#a8104f"><ZoomApp /></Tile>
            <Tile $w={46}><Snip /></Tile>
            <Tile $w={40} $bar="#a8104f" $inset={3}><Chrome /></Tile>
            <Tile $w={42} $bg="#ffb570" $bar="#ef8a2c"><PinkApp /></Tile>
            <TrayGap $w={16} />
            <TrayCell $w={38}><Sun /></TrayCell>
            <TrayCell $w={24} $fs={12}>25°C</TrayCell>
            <TrayGap $w={12} />
            <TrayCell $w={22}><Chevron /></TrayCell>
            <TrayCell $w={22}><MeetIcon /></TrayCell>
            <TrayCell $w={20}><OrangeRing /></TrayCell>
            <TrayCell $w={22}><Battery /></TrayCell>
            <TrayCell $w={24}><Wifi /></TrayCell>
            <TrayCell $w={16}><Speaker /></TrayCell>
            <TrayCell $w={38} $fs={10.6}>ENG</TrayCell>
            <TrayCell $w={58} $fs={10.6}><span>12:35</span><span>08-12-2021</span></TrayCell>
            <TrayCell $w={42}><NotifIcon s={15} /><NotifBadge $x={21} $y={17} $s={14} $fs={9}>3</NotifBadge></TrayCell>
            <TrayEnd />
          </RemoteTaskbar>
        </RemoteScreen>
      </VideoStage>

      <SeekRow>
        <TimeLabel>1:22:34</TimeLabel>
        <SeekTrack><SeekFill style={{ width: `${((975 - 63) / (1305 - 63)) * 100}%` }} /></SeekTrack>
        <TimeLabel>1:52:30</TimeLabel>
      </SeekRow>
      <ControlsRow>
        <PlayButton><svg width="16" height="20" viewBox="0 0 16 20" fill="#767676"><path d="M1 1l14 9-14 9z" /></svg></PlayButton>
        {ctlGroups.map((g, i) => (
          <CtlGroup key={i}>{g.map((ic, k) => <CtlButton key={k}>{ic}</CtlButton>)}</CtlGroup>
        ))}
        <VolumeBox>
          <svg width="15" height="14" viewBox="0 0 15 14"><path fill="#777" d="M0 4h3l3-3v12L3 10H0z" /><path d="M8 4c1.500 2 1.500 4 0 6M10 2.500c2.500 3 2.500 6 0 9M12 1c3.500 4 3.500 8 0 12" stroke="#f39a20" fill="none" /></svg>
          <svg width="74" height="22" viewBox="0 0 74 22">
            <defs><linearGradient id="volA" x1="0" y1="0" x2="1" y2="0"><stop offset="0" stopColor="#8fd08f" /><stop offset=".62" stopColor="#14c214" /><stop offset=".8" stopColor="#ffd62a" /><stop offset="1" stopColor="#ea3a10" /></linearGradient></defs>
            <path d="M.5 21 73 1v20z" fill="url(#volA)" stroke="#7a7a7a" strokeWidth="1" />
          </svg>
          <VolumeText>125%</VolumeText>
        </VolumeBox>
      </ControlsRow>

      <Taskbar>
        <StartSlot $w={49}><WinLogo s={16} /></StartSlot>
        <SearchBox $w={342} $fs={14} $pl={11} $gap={11}><SearchGlyph s={17} />Type here to search</SearchBox>
        <Tile $w={49}><CortanaRing $s={16} /></Tile>
        <Tile $w={50}><TaskView s={16} /></Tile>
        <Tile $w={49}><Record /></Tile>
        <Tile $w={49} $bar="#1f6fb2" $inset={5}><ChromeProfile /></Tile>
        <Tile $w={49} $bar="#1f6fb2" $inset={5}><Files /></Tile>
        <Tile $w={49}><Snip /></Tile>
        <Tile $w={49}><Store /></Tile>
        <Tile $w={49}><ZoomApp /></Tile>
        <Tile $w={49} $bar="#1f6fb2" $inset={5}><Stickies /></Tile>
        <Tile $w={49} $bar="#1f6fb2" $inset={5}><Notepad /></Tile>
        <Tile $w={49} $bg="#eef3f5" $bar="#1f6fb2"><VlcCone s={22} /></Tile>
        <Tile $w={49} $bg="#e2edf2"><Photos /></Tile>
        <TaskSpacer />
        <TrayCell $w={22}><Chevron s={13} /></TrayCell>
        <TrayCell $w={27}><svg width="16" height="16" viewBox="0 0 16 16"><rect width="16" height="16" fill="#1a6fc0" /><path d="M8 3v10M3 8h10" stroke="#fff" strokeWidth="2" /></svg></TrayCell>
        <TrayCell $w={22}><Wifi s={15} c="#222" /></TrayCell>
        <TrayCell $w={35} $fs={12} $lh={16.500}><span>ENG</span><span>IN</span></TrayCell>
        <TrayCell $w={72} $fs={12} $lh={16.500}><span>09:01</span><span>02-06-2022</span></TrayCell>
        <TrayCell $w={36}><NotifIcon s={16} /><NotifBadge $x={21} $y={19} $s={15} $fs={11}>6</NotifBadge></TrayCell>
      </Taskbar>
    </Page>
  );
}
